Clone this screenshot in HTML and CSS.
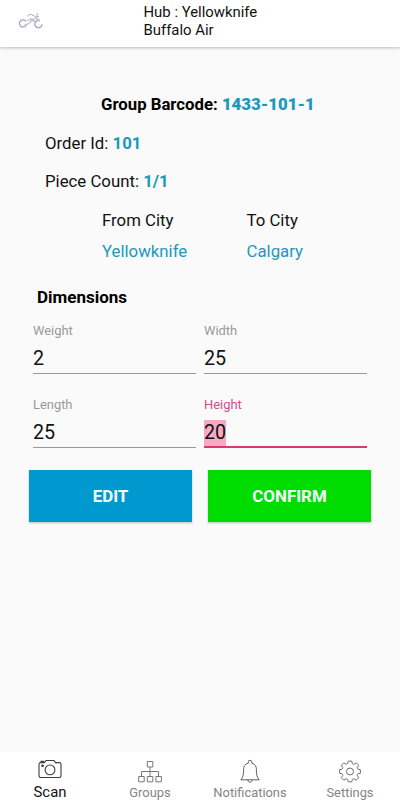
FILE: index.html
```
<!DOCTYPE html>
<html lang="en">
<head>
<meta charset="utf-8">
<title>Scan</title>
<link rel="stylesheet" href="styles.css">
</head>
<body>
<header class="topbar">
  <svg class="logo" width="26" height="18" viewBox="0 0 26 18" fill="none" stroke-linecap="round">
    <path d="M7.500 8.700A3.600 3.600 0 1 0 8 13.500M21.500 8.700A3.600 3.600 0 1 0 24 12.500" stroke="#9f9bb8" stroke-width="1.2"/>
    <path d="M9.500 4l2.500-1.800 3 1.200M7 12.500l4-.7 3-3.300 3 1M9 9l4-2.500 3 2M12 9.500l4-3M18 6.500l1.500-5M15.500 3.500l2 1.500 3-.5M17 7h4" stroke="#b0adc3" stroke-width="1"/>
  </svg>
  <div class="hub">Hub : Yellowknife<br>Buffalo Air</div>
</header>
<main class="content">
  <div class="row barcode">Group Barcode: <b class="blue">1433-101-1</b></div>
  <div class="row">Order Id: <b class="blue">101</b></div>
  <div class="row">Piece Count: <b class="blue">1/1</b></div>
  <div class="cities">
    <div>From City</div><div>To City</div>
    <div class="blue">Yellowknife</div><div class="blue">Calgary</div>
  </div>
  <h2 class="heading">Dimensions</h2>
  <div class="fields">
    <div class="field"><div class="label">Weight</div><div class="value"><span>2</span></div></div>
    <div class="field"><div class="label">Width</div><div class="value"><span>25</span></div></div>
    <div class="field"><div class="label">Length</div><div class="value"><span>25</span></div></div>
    <div class="field active"><div class="label">Height</div><div class="value"><span>20</span></div></div>
  </div>
  <div class="buttons">
    <button class="btn edit">EDIT</button>
    <button class="btn confirm">CONFIRM</button>
  </div>
</main>
<nav class="tabs">
  <div class="tab selected">
    <svg width="26" height="26" viewBox="0 0 26 26" fill="none" stroke="#3c3c3c" stroke-width="1.1">
      <path d="M3.700 4.600H7.500L9 2.500H17L18.500 4.600H22.300Q24 4.600 24 6.300V17.800Q24 19.500 22.300 19.500H3.700Q2 19.500 2 17.800V6.300Q2 4.600 3.700 4.600ZM4 4.400V3.400H6.500V4.400"/>
      <circle cx="13" cy="11.900" r="4.900"/><circle cx="5.600" cy="7.800" r=".8" fill="#3c3c3c"/>
    </svg>
    <span>Scan</span>
  </div>
  <div class="tab">
    <svg width="26" height="26" viewBox="0 0 26 26" fill="none" stroke="#777" stroke-width="1">
      <path d="M10.300 3.500h5.500v5.500h-5.500zM1.700 18.500h5.500v5.300h-5.500zM10.300 18.500h5.500v5.300h-5.500zM18.900 18.500h5.500v5.300h-5.500zM13 9v9.500M4.500 18.500v-5h17v5"/>
    </svg>
    <span>Groups</span>
  </div>
  <div class="tab">
    <svg width="26" height="26" viewBox="0 0 26 26" fill="none" stroke="#606060" stroke-width="1" stroke-linejoin="round">
      <path d="M11.300 5.200V3.800Q11.300 2.300 13 2.300T14.700 3.800V5.200C18.200 6 19.400 8.500 19.400 11.500C19.400 16.500 19.800 19 22.200 21.800H3.800C6.200 19 6.600 16.500 6.600 11.500C6.600 8.500 7.800 6 11.300 5.200M10.800 22C11 25 15 25 15.200 22"/>
    </svg>
    <span>Notifications</span>
  </div>
  <div class="tab">
    <svg width="26" height="26" viewBox="-13 -13.500 26 26" fill="none" stroke="#707070" stroke-width="1" stroke-linejoin="round">
      <path d="M-1.800-10.400H1.800L2.300-8Q3.200-7 4-7.300L6.200-8.700 8.700-6.200 7.300-4Q7-3.200 8-2.300L10.400-1.800V1.800L8 2.300Q7 3.200 7.300 4L8.700 6.200 6.200 8.700 4 7.300Q3.200 7 2.300 8L1.800 10.400H-1.800L-2.300 8Q-3.200 7-4 7.300L-6.200 8.700-8.700 6.200-7.300 4Q-7 3.200-8 2.300L-10.400 1.800V-1.800L-8-2.300Q-7-3.200-7.300-4L-8.700-6.200-6.200-8.700-4-7.300Q-3.200-7-2.300-8Z"/>
      <circle r="3.500"/>
    </svg>
    <span>Settings</span>
  </div>
</nav>
</body>
</html>
```
FILE: styles.css
```
* { box-sizing: border-box; }
body {
  margin: 0;
  height: 800px;
  display: flex;
  flex-direction: column;
  overflow: hidden;
  background: #fafafa;
  color: #111;
  font-family: Roboto, sans-serif;
  font-size: 16.8px;
}
.topbar {
  height: 47px;
  flex: none;
  display: flex;
  background: #fff;
  box-shadow: 0 1px 3px rgba(0, 0, 0, .25);
}
.logo { margin: 12px 0 0 18px; }
.hub {
  margin: 4px 0 0 99.5px;
  font-size: 14.9px;
  line-height: 17.5px;
}
.content { flex: 1; padding-top: 38px; }
.row {
  height: 38.5px;
  line-height: 38.5px;
  padding-left: 45px;
  white-space: nowrap;
}
.barcode { padding-left: 101px; font-size: 16.75px; font-weight: 700; color: #000; }
.blue { color: #1c98bf; }
.cities {
  display: grid;
  grid-template-columns: 144.5px 1fr;
  padding: 4px 0 0 102px;
  line-height: 31px;
}
.heading {
  margin: 20px 0 0 37px;
  font-size: 17px;
  line-height: 20px;
  color: #000;
}
.fields {
  display: grid;
  grid-template-columns: 163px 163px;
  column-gap: 8px;
  margin: 15.5px 0 0 33px;
}
.field { height: 74px; }
.label { font-size: 12.9px; line-height: 17px; color: #999; }
.value {
  height: 35px;
  padding-top: 7px;
  font-size: 19.7px;
  line-height: 26px;
  border-bottom: 1px solid #999;
}
.value span { display: inline-block; }
.active .label { color: #d8488a; }
.active .value { height: 35px; border-bottom: 2px solid #d83a70; }
.active .value span { background: #f8a9c4; }
.buttons { display: flex; gap: 16px; margin: 0 0 0 29px; }
.btn {
  width: 163px;
  height: 52px;
  padding: 0;
  border: 0;
  color: #f4ffff;
  font: 700 16.9px Roboto, sans-serif;
  box-shadow: 0 1px 2px rgba(0, 0, 0, .25);
}
.edit { background: #0099cf; }
.confirm { background: #00db00; }
.tabs {
  height: 48px;
  flex: none;
  display: flex;
  background: #fff;
}
.tab {
  flex: 1;
  display: flex;
  flex-direction: column;
  align-items: center;
  padding-top: 6px;
  font-size: 12.9px;
  line-height: 17px;
  color: #858585;
}
.tab svg { flex: none; }
.selected { color: #111; font-size: 14.9px; }
```
